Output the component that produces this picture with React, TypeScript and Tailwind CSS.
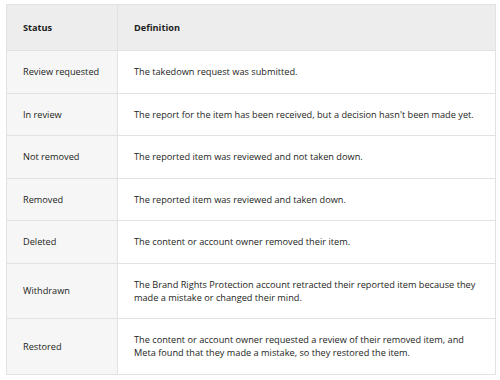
import React from 'react';

const rows: { status: string; definition: string }[] = [
  { status: 'Review requested', definition: 'The takedown request was submitted.' },
  { status: 'In review', definition: "The report for the item has been received, but a decision hasn't been made yet." },
  { status: 'Not removed', definition: 'The reported item was reviewed and not taken down.' },
  { status: 'Removed', definition: 'The reported item was reviewed and taken down.' },
  { status: 'Deleted', definition: 'The content or account owner removed their item.' },
  {
    status: 'Withdrawn',
    definition:
      'The Brand Rights Protection account retracted their reported item because they made a mistake or changed their mind.',
  },
  {
    status: 'Restored',
    definition:
      'The content or account owner requested a review of their removed item, and Meta found that they made a mistake, so they restored the item.',
  },
];

const App: React.FC = () => {
  return (
    <div className="w-[500px] h-[380px] bg-white pt-1 px-[6px] font-['Open_Sans',sans-serif] text-[9.2px] text-[#1c1e21]">
      <table className="w-[490px] border-collapse table-fixed">
        <colgroup>
          <col className="w-[111px]" />
          <col />
        </colgroup>
        <thead>
          <tr className="bg-[#ededed]">
            <th className="h-[46px] text-left font-bold pl-4 border border-[#e2e2e2]">Status</th>
            <th className="h-[46px] text-left font-bold pl-4 border border-[#e2e2e2]">Definition</th>
          </tr>
        </thead>
        <tbody>
          {rows.map((row) => (
            <tr key={row.status}>
              <td className="bg-[#f6f6f6] pl-4 py-[14.25px] leading-[13px] border border-[#e2e2e2] align-middle">
                {row.status}
              </td>
              <td className="pl-4 pr-[12px] py-[14.25px] leading-[13px] border border-[#e2e2e2] align-middle">
                {row.definition}
              </td>
            </tr>
          ))}
        </tbody>
      </table>
    </div>
  );
};

export default App;
